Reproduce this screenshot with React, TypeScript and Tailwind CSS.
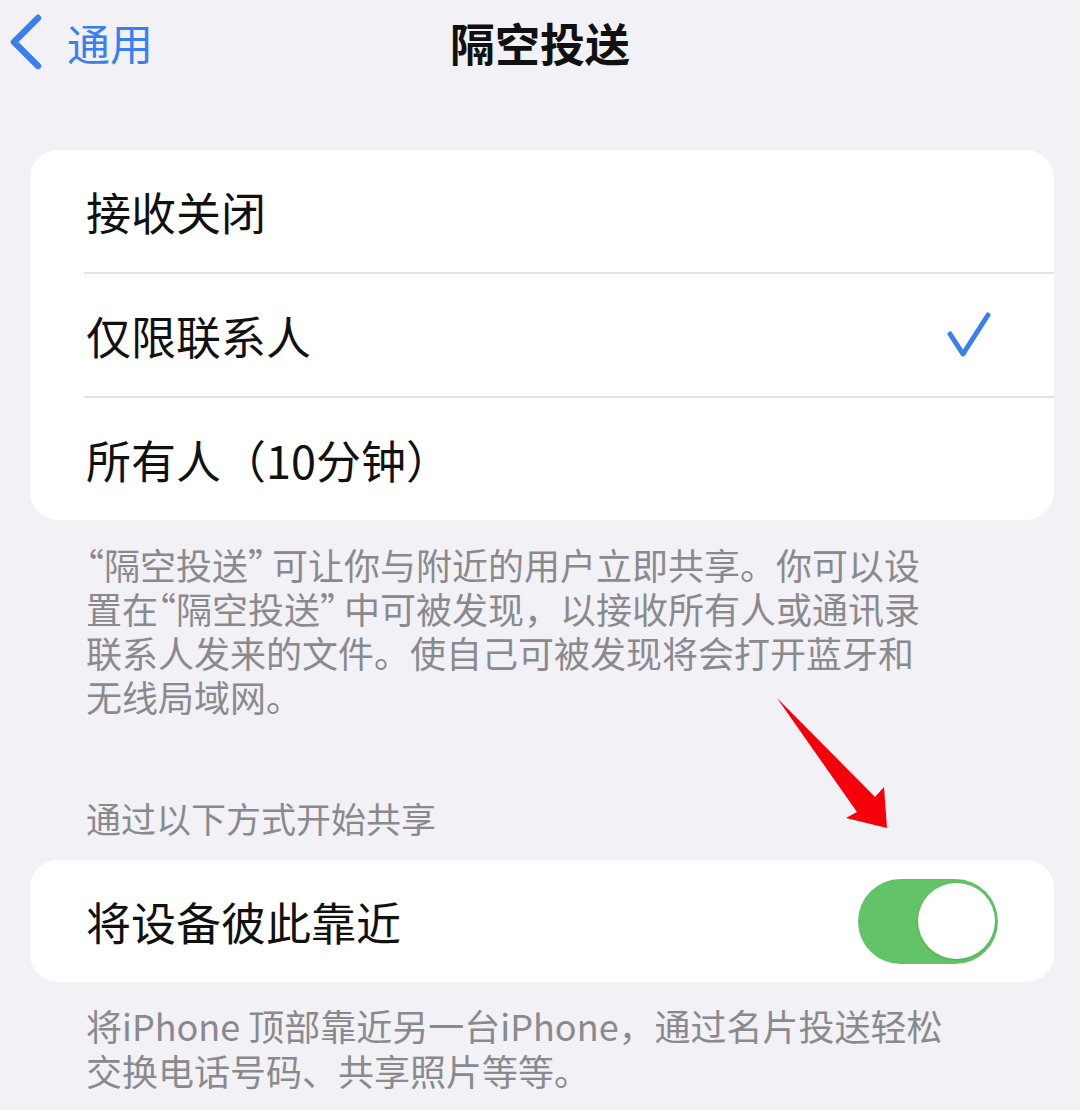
const font = { fontFamily: '"Noto Sans CJK SC", "Noto Sans", sans-serif' }

const OPTIONS = ['接收关闭', '仅限联系人', '所有人（10分钟）']
const SELECTED = 1

// quotes set with half-width alternates so they sit tight like the system font
function Q({ open }: { open?: boolean }) {
  return (
    <span className={`[font-feature-settings:'halt'] ${open ? '' : 'mr-[6px]'}`}>{open ? '“' : '”'}</span>
  )
}

function Check() {
  return (
    <svg width="46" height="46" viewBox="0 0 46 46" fill="none">
      <path d="M4 22 L17 42 L42 3" stroke="#3a7ff0" strokeWidth="5" strokeLinecap="round" strokeLinejoin="round" />
    </svg>
  )
}

function BackChevron() {
  return (
    <svg width="40" height="56" viewBox="0 0 40 56" fill="none">
      <path d="M34 4 L10 28 L34 52" stroke="#3a7ff0" strokeWidth="6.5" strokeLinecap="round" strokeLinejoin="round" />
    </svg>
  )
}

function Toggle({ on }: { on: boolean }) {
  return (
    <div className={`flex h-[85px] w-[140px] items-center rounded-full px-[3px] ${on ? 'justify-end bg-[#62c466]' : 'justify-start bg-[#e5e5ea]'}`}>
      <div className="h-[76px] w-[77px] rounded-full bg-white shadow-[0_1px_3px_rgba(0,0,0,0.15)]" />
    </div>
  )
}

export default function App() {
  return (
    <div style={font} className="relative h-[1110px] w-[1080px] overflow-hidden bg-[#f2f1f6]">
      {/* nav bar */}
      <div className="relative flex h-[84px] items-center">
        <div className="flex items-center pl-[4px] text-[#3a7ff0]">
          <BackChevron />
          <span className="ml-[23px] text-[43px] leading-none">通用</span>
        </div>
        <div className="absolute inset-x-0 text-center text-[45px] font-bold leading-none text-[#111]">隔空投送</div>
      </div>

      {/* receiving options */}
      <div className="ml-[30px] mt-[66px] w-[1024px] overflow-hidden rounded-[28px] bg-white">
        {OPTIONS.map((label, i) => (
          <div key={label}>
            {i > 0 && <div className="ml-[54px] h-[2px] bg-[#e3e3e6]" />}
            <div className="flex h-[122px] items-center justify-between pl-[56px] pr-[62px]">
              <span className="text-[45px] leading-none text-[#111]">{label}</span>
              {i === SELECTED && <Check />}
            </div>
          </div>
        ))}
      </div>

      <div className="mt-[22px] whitespace-nowrap pl-[86px] text-[36px] leading-[44px] text-[#8a8a8e]">
        <div>
          <Q open />隔空投送<Q />可让你与附近的用户立即共享。你可以设
        </div>
        <div>
          置在<Q open />隔空投送<Q />中可被发现，以接收所有人或通讯录
        </div>
        <div>联系人发来的文件。使自己可被发现将会打开蓝牙和</div>
        <div>无线局域网。</div>
      </div>

      <div className="mt-[78px] pl-[86px] text-[35px] leading-[44px] text-[#8a8a8e]">通过以下方式开始共享</div>

      {/* NameDrop */}
      <div className="ml-[30px] mt-[20px] flex h-[122px] w-[1024px] items-center justify-between rounded-[28px] bg-white pl-[56px] pr-[56px]">
        <span className="text-[45px] leading-none text-[#111]">将设备彼此靠近</span>
        <Toggle on />
      </div>

      <div className="mt-[21px] whitespace-nowrap pl-[86px] text-[36px] leading-[45px] text-[#8a8a8e]">
        <div>将iPhone 顶部靠近另一台iPhone，通过名片投送轻松</div>
        <div>交换电话号码、共享照片等等。</div>
      </div>

      {/* red pointer arrow */}
      <svg className="absolute left-[760px] top-[680px]" width="140" height="160" viewBox="0 0 140 160">
        <polygon points="17,18 115,117 124,107 127,148 86,138 97,132" fill="#f5000a" />
      </svg>
    </div>
  )
}
